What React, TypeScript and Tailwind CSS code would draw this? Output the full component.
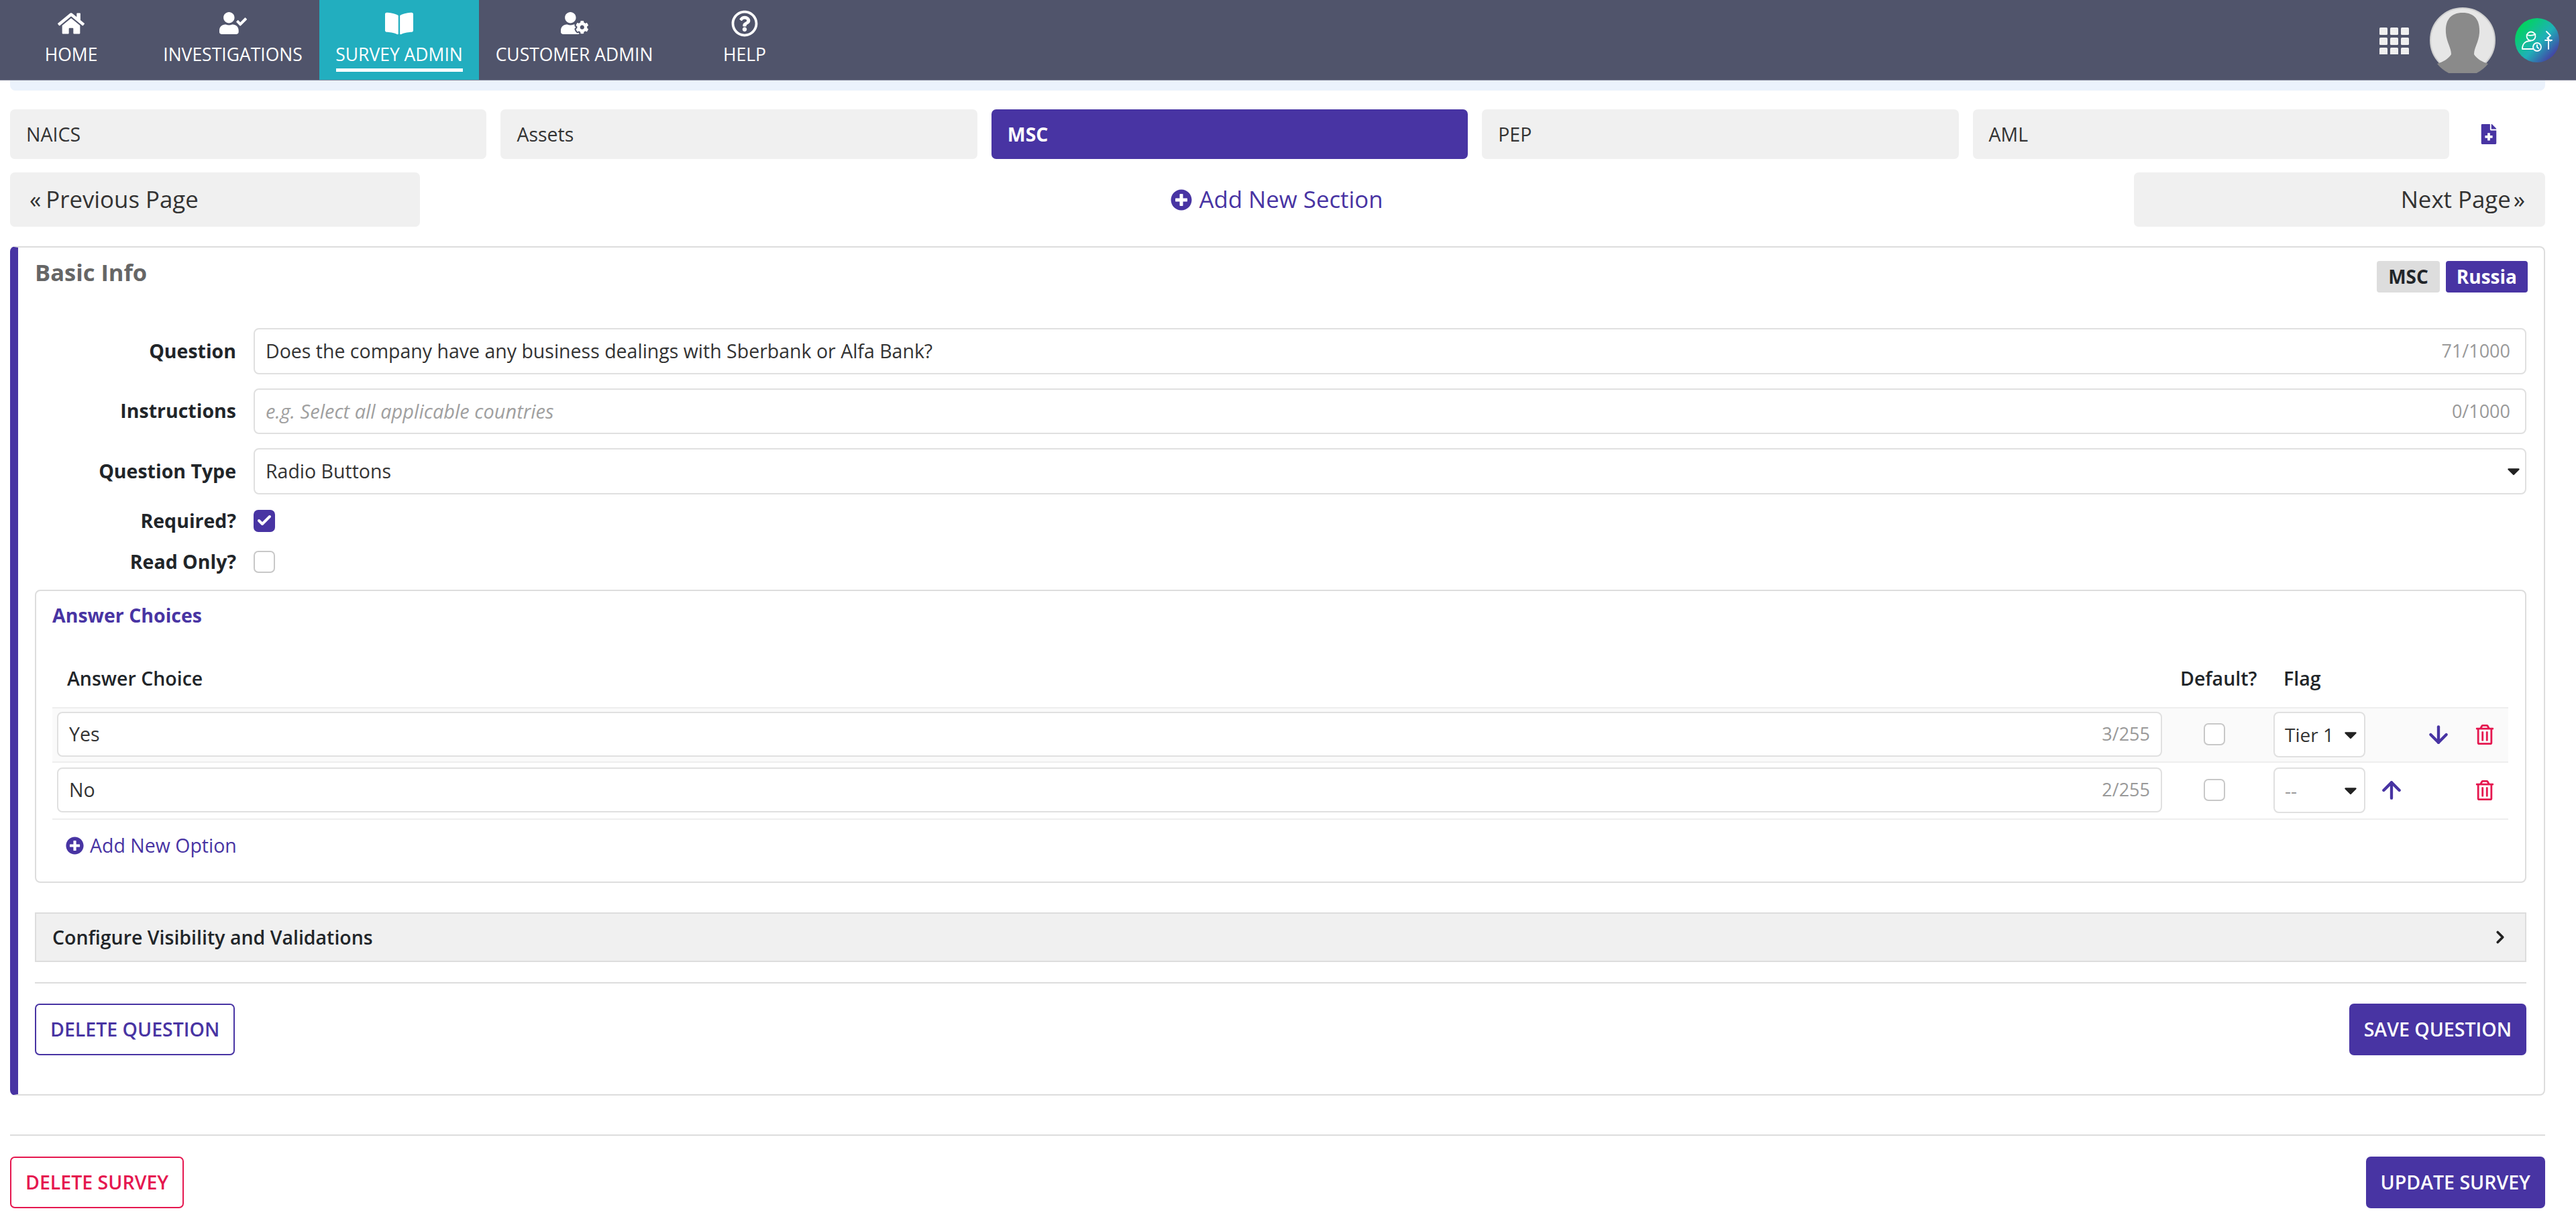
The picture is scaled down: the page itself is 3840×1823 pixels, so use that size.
import React from "react";
import { FaHome, FaUserCheck, FaBookOpen, FaUserCog, FaRegQuestionCircle, FaFileMedical, FaPlusCircle, FaRegTrashAlt, FaCaretDown } from "react-icons/fa";
import { ArrowDown, ArrowUp, Check, ChevronRight } from "lucide-react";

const nav = [
  { label: "HOME", w: "w-[218px] pr-[6px]", icon: <FaHome size={40} /> },
  { label: "INVESTIGATIONS", w: "w-[258px]", icon: <FaUserCheck size={41} /> },
  { label: "SURVEY ADMIN", w: "w-[238px]", icon: <FaBookOpen size={42} />, active: true },
  { label: "CUSTOMER ADMIN", w: "w-[284px]", icon: <FaUserCog size={41} /> },
  { label: "HELP", w: "w-[224px]", icon: <FaRegQuestionCircle size={40} /> },
];

const tabs = ["NAICS", "Assets", "MSC", "PEP", "AML"];

function Field({ label, children }: { label: string; children: React.ReactNode }) {
  return (
    <div className="flex h-[68.5px] items-center gap-[26px]">
      <div className="w-[300px] text-right text-[28.5px] font-bold text-[#212529]">{label}</div>
      <div className="flex h-full flex-1 items-center justify-between rounded-[8px] border-2 border-[#e0e0e0] bg-white pl-[16px] pr-[22px] text-[28.5px] text-[#333]">
        {children}
      </div>
    </div>
  );
}

function CheckField({ label, checked }: { label: string; checked?: boolean }) {
  return (
    <div className="flex h-[33px] items-center gap-[26px]">
      <div className="w-[300px] text-right text-[28.5px] font-bold text-[#212529]">{label}</div>
      <Box checked={checked} />
    </div>
  );
}

function Box({ checked }: { checked?: boolean }) {
  return checked ? (
    <div className="flex h-[33px] w-[32px] items-center justify-center rounded-[7px] bg-[#4834a3] text-white">
      <Check size={24} strokeWidth={4} />
    </div>
  ) : (
    <div className="h-[33px] w-[32px] rounded-[7px] border-2 border-[#c8c8c8] bg-white" />
  );
}

function AnswerRow({ value, count, flag, up, down, first }: { value: string; count: string; flag: string; up?: boolean; down?: boolean; first?: boolean }) {
  return (
    <div className={`flex items-center border-b-2 border-[#eeeeee] pb-[2px] ${first ? "h-[81px] bg-[#fafafa]" : "h-[85px] bg-white"}`}>
      <div className="w-[3145px] shrink-0 pl-[7px]">
        <div className="flex h-[67px] items-center justify-between rounded-[8px] border-2 border-[#e0e0e0] bg-white pl-[16px] pr-[16px] text-[28.5px] text-[#333]">
          <span>{value}</span>
          <span className="text-[27px] text-[#999]">{count}</span>
        </div>
      </div>
      <div className="flex w-[166px] shrink-0 justify-center pr-[10px]">
        <Box />
      </div>
      <div className="flex h-[68px] w-[137px] shrink-0 items-center justify-between rounded-[8px] border-2 border-[#e0e0e0] bg-white pl-[15px] pr-[5px] text-[28px]">
        <span className={flag === "--" ? "text-[#999]" : "text-[#333]"}>{flag}</span>
        <FaCaretDown size={30} className="text-[#222]" />
      </div>
      <div className="flex w-[78px] shrink-0 justify-center text-[#4834a3]">{up && <ArrowUp size={40} strokeWidth={2.6} />}</div>
      <div className="flex w-[62px] shrink-0 justify-center text-[#4834a3]">{down && <ArrowDown size={40} strokeWidth={2.6} />}</div>
      <div className="flex w-[73px] shrink-0 justify-center pl-[3px] text-[#e5174f]">
        <FaRegTrashAlt size={30} />
      </div>
    </div>
  );
}

export default function App() {
  return (
    <div className="min-h-[1823px] bg-white font-['Open_Sans','Noto_Sans',sans-serif] text-[#212529]">
      <header className="flex h-[120px] items-stretch justify-between border-b border-[#8b8ea0] bg-[#50546b] text-white">
        <nav className="flex">
          {nav.map((n) => (
            <div key={n.label} className={`flex flex-col items-center ${n.w} ${n.active ? "bg-[#22aebf]" : ""}`}>
              <div className="flex h-[67px] items-center justify-center pt-[2px]">{n.icon}</div>
              <div className="text-[26.5px] leading-[28px]">{n.label}</div>
              {n.active && <div className="mt-[7px] h-[5px] w-[189px] bg-white" />}
            </div>
          ))}
        </nav>
        <div className="flex items-center">
          <svg width="44" height="40" viewBox="0 0 44 40" className="mr-[31px] mt-[3px]" fill="#f0f0f0">
            {[0, 15, 30].map((y) => [0, 16, 32].map((x) => <rect key={`${x}-${y}`} x={x} y={y} width="12" height="11" rx="1.5" />))}
          </svg>
          <svg width="98" height="98" viewBox="0 0 98 98" className="mr-[29px]">
            <circle cx="49" cy="49" r="48" fill="#e6e6e6" stroke="#cfcfcf" strokeWidth="2" />
            <path d="M49 8C30 8 23 20 24 38C25 52 32 60 32 70C28 77 18 82 11 84A48 48 0 0 0 87 84C80 82 70 77 66 70C66 60 73 52 74 38C75 20 68 8 49 8Z" fill="#8a8a8a" />
          </svg>
          <svg width="66" height="66" viewBox="0 0 66 66" className="mr-[25px]">
            <defs>
              <linearGradient id="g" x1="0.1" y1="0.15" x2="0.9" y2="0.9">
                <stop offset="0" stopColor="#00d659" />
                <stop offset="0.55" stopColor="#1fb0b8" />
                <stop offset="1" stopColor="#4834a3" />
              </linearGradient>
            </defs>
            <circle cx="33" cy="33" r="33" fill="url(#g)" />
            <g fill="none" stroke="#fff" strokeWidth="1.8" strokeLinecap="round" strokeLinejoin="round">
              <circle cx="24" cy="27" r="6.5" />
              <path d="M17.5 25C21 26 27 26 30.5 24" />
              <path d="M23 34C16 34 11 38 11 46H27" />
              <circle cx="33" cy="43" r="6" />
              <path d="M33 40V43L35 45" />
              <path d="M47 20L53 26L48 30L53 34M50 28V46M45 33H55" />
            </g>
          </svg>
        </div>
      </header>

      <main className="pl-[15px] pr-[46px]">
        <div className="h-[15px] rounded-b-[8px] bg-[#ebf2fc]" />

        <div className="mt-[28px] flex h-[74px] items-center gap-[21px]">
          {tabs.map((t) => (
            <div
              key={t}
              className={`flex h-full w-[710.4px] items-center rounded-[7px] pl-[24px] text-[28.5px] ${t === "MSC" ? "bg-[#4834a3] font-bold text-white" : "bg-[#f0f0f0] text-[#333]"}`}
            >
              {t}
            </div>
          ))}
          <FaFileMedical size={30} className="ml-[23px] text-[#4834a3]" />
        </div>

        <div className="mt-[20px] flex h-[81px] items-center justify-between">
          <div className="flex h-full w-[611px] items-center gap-[7px] rounded-[7px] bg-[#f0f0f0] pl-[29px] text-[34.8px] text-[#333]">
            <span>«</span>
            <span>Previous Page</span>
          </div>
          <div className="flex items-center gap-[10px] text-[34.8px] text-[#4834a3]">
            <FaPlusCircle size={32} />
            <span>Add New Section</span>
          </div>
          <div className="flex h-full w-[613px] items-center justify-end gap-[4px] rounded-[7px] bg-[#f0f0f0] pr-[30px] text-[34.8px] text-[#333]">
            <span>Next Page</span>
            <span>»</span>
          </div>
        </div>

        <section className="mt-[29px] rounded-[8px] border-2 border-l-[12px] border-[#dddddd] border-l-[#4834a3] pb-[58px] pl-[25px] pr-[26px] pt-[20px]">
          <div className="flex items-start justify-between">
            <div className="text-[34.5px] font-bold leading-[34px] text-[#666]">Basic Info</div>
            <div className="-mr-[2px] flex gap-[9px] text-[28px] font-bold leading-[47px]">
              <span className="rounded-[4px] bg-[#dddddd] px-[17px] text-[#212529]">MSC</span>
              <span className="rounded-[4px] bg-[#4834a3] px-[16px] text-white">Russia</span>
            </div>
          </div>

          <div className="mt-[53px] flex flex-col gap-[21px]">
            <Field label="Question">
              <span>Does the company have any business dealings with Sberbank or Alfa Bank?</span>
              <span className="text-[27px] text-[#999]">71/1000</span>
            </Field>
            <Field label="Instructions">
              <span className="text-[29px] italic text-[#a0a0a0]">e.g. Select all applicable countries</span>
              <span className="text-[27px] text-[#999]">0/1000</span>
            </Field>
            <Field label="Question Type">
              <span>Radio Buttons</span>
              <FaCaretDown size={30} className="-mr-[20px] text-[#222]" />
            </Field>
          </div>

          <div className="mt-[23px]">
            <CheckField label="Required?" checked />
          </div>
          <div className="mt-[28px]">
            <CheckField label="Read Only?" />
          </div>

          <div className="mt-[25.5px] rounded-[8px] border-2 border-[#dddddd] pb-[36px] pl-[24px] pr-[25px] pt-[18px]">
            <div className="text-[28.5px] font-bold leading-[36px] text-[#4834a3]">Answer Choices</div>
            <div className="mt-[33px] flex h-[88px] items-center border-b-2 border-[#eeeeee] text-[28.5px] font-semibold text-[#212529]">
              <div className="w-[3172px] shrink-0 pl-[22px]">Answer Choice</div>
              <div className="w-[154px] shrink-0">Default?</div>
              <div>Flag</div>
            </div>
            <AnswerRow value="Yes" count="3/255" flag="Tier 1" down first />
            <AnswerRow value="No" count="2/255" flag="--" up />
            <div className="mt-[20px] flex h-[36px] items-center gap-[9px] pl-[20px] text-[28.5px] text-[#4834a3]">
              <FaPlusCircle size={27} />
              <span>Add New Option</span>
            </div>
          </div>

          <div className="mt-[44px] flex h-[74px] items-center justify-between border-2 border-[#dddddd] bg-[#f0f0f0] pl-[24px] pr-[22px] text-[28.5px] font-semibold">
            <span>Configure Visibility and Validations</span>
            <ChevronRight size={30} strokeWidth={3} className="text-[#222]" />
          </div>

          <div className="mt-[30px] h-[2px] bg-[#dddddd]" />

          <div className="mt-[30px] flex items-center justify-between">
            <button className="h-[77px] rounded-[7px] border-2 border-[#4834a3] bg-white px-[21px] text-[28.5px] font-semibold text-[#4834a3]">DELETE QUESTION</button>
            <button className="h-[77px] rounded-[7px] bg-[#4834a3] px-[22px] text-[28.5px] font-semibold text-white">SAVE QUESTION</button>
          </div>
        </section>

        <div className="mt-[58px] h-[2px] bg-[#dddddd]" />

        <div className="mt-[31px] flex items-center justify-between">
          <button className="h-[77px] rounded-[7px] border-2 border-[#e5174f] bg-white px-[21px] text-[28.5px] font-semibold text-[#e5174f]">DELETE SURVEY</button>
          <button className="h-[77px] rounded-[7px] bg-[#4834a3] px-[22px] text-[28.5px] font-semibold text-white">UPDATE SURVEY</button>
        </div>
      </main>
    </div>
  );
}
